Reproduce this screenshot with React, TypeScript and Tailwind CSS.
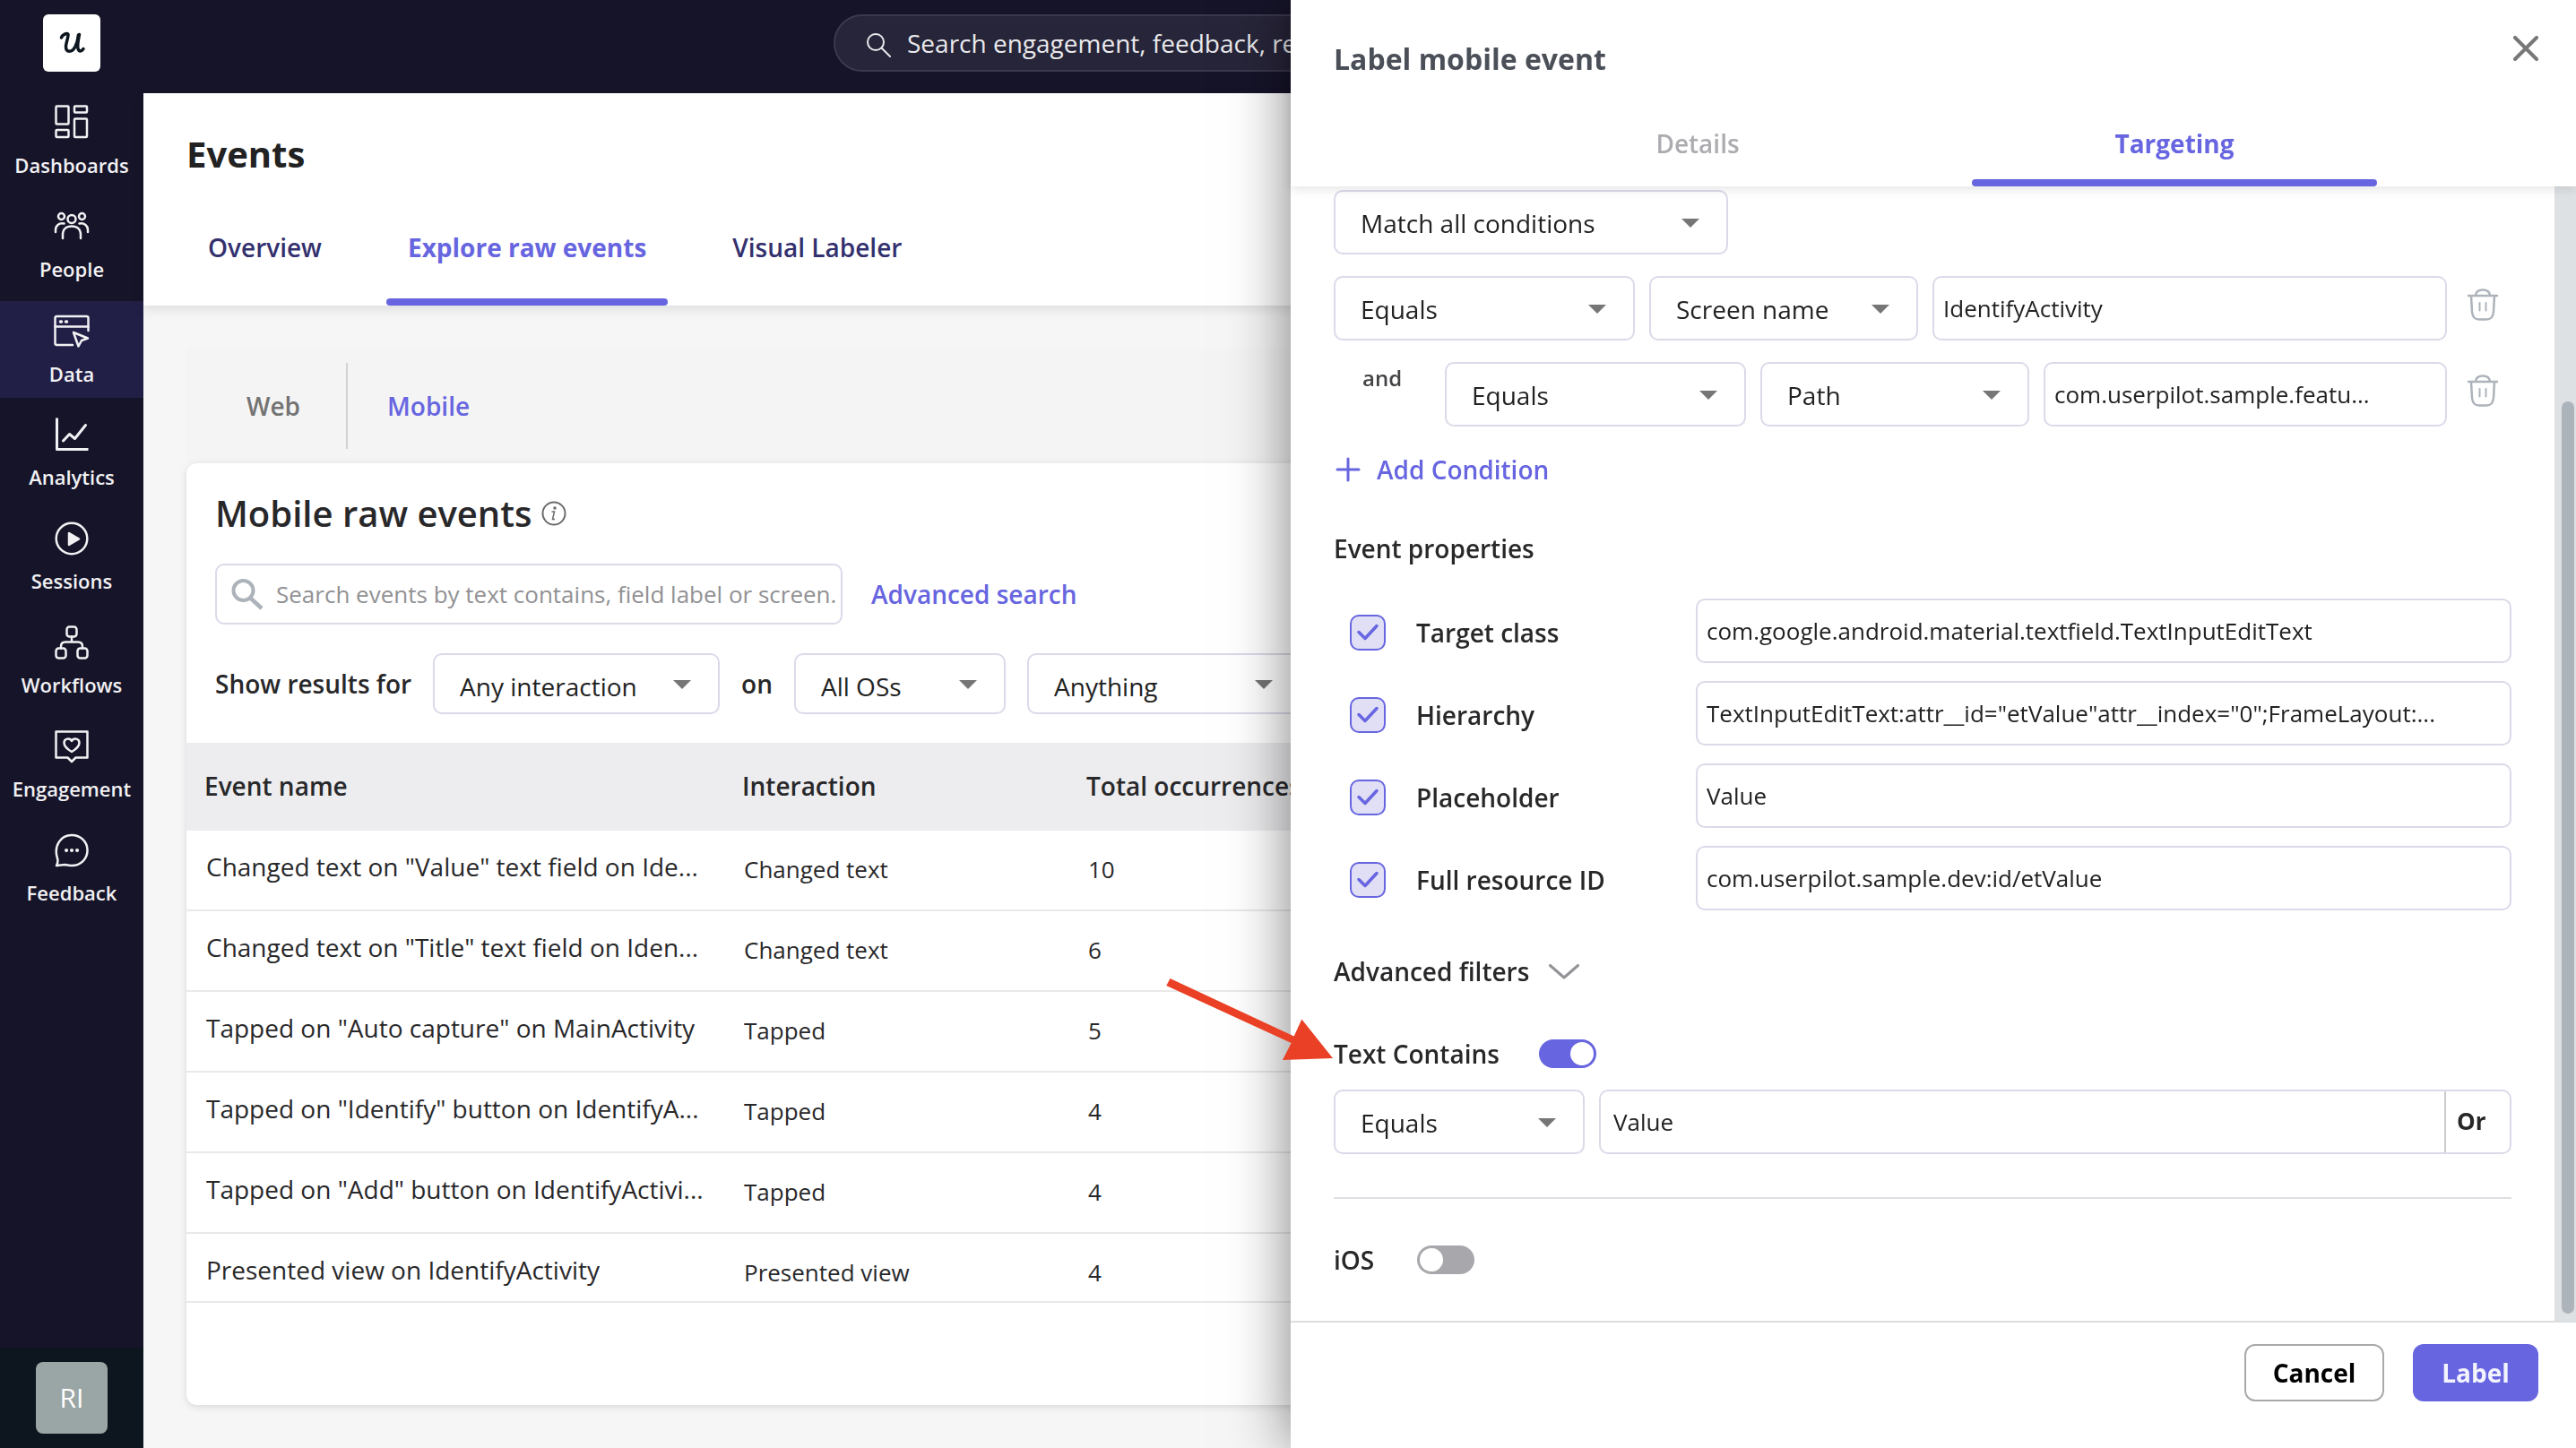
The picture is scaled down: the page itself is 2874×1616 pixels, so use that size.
import type { ReactNode } from 'react'

type SelectProps = {
  label: string
  value: string
  className: string
  padding?: string
}

type ToggleProps = {
  id: string
  checked?: boolean
}

const navItems: { name: string; active?: boolean; icon: ReactNode }[] = [
  {
    name: 'Dashboards',
    icon: (
      <g>
        <rect x="2.5" y="1.5" width="14" height="20" rx="1" />
        <rect x="23" y="1.5" width="14" height="7" rx="1" />
        <rect x="2.5" y="28" width="14" height="8" rx="1" />
        <rect x="23" y="15.500" width="14" height="20.500" rx="1" />
      </g>
    ),
  },
  {
    name: 'People',
    icon: (
      <g>
        <circle cx="20" cy="11.500" r="4.500" />
        <circle cx="8.500" cy="8.500" r="3.500" />
        <circle cx="31.500" cy="8.500" r="3.500" />
        <path d="M10 33v-4c0-6 4-9.500 10-9.500S30 23 30 29v4" />
        <path d="M2 26v-2c0-5 3.500-8.500 9.500-7.500M38 26v-2c0-5-3.500-8.500-9.500-7.500" />
      </g>
    ),
  },
  {
    name: 'Data',
    active: true,
    icon: (
      <g>
        <path d="M21 35H3.500C2 35 1.500 34.500 1.500 33V5c0-1.500.5-2 2-2h33c1.500 0 2 .5 2 2v14" />
        <path d="M1.500 14.500h37" />
        <path d="M7.500 9h1M13.500 9h1" strokeWidth="3.500" />
        <path d="M22 21l16 6.500-7 2.500-3.500 6.500z" />
      </g>
    ),
  },
  {
    name: 'Analytics',
    icon: (
      <g strokeWidth="3">
        <path d="M3.500 1.500v35h35" strokeLinecap="butt" />
        <path d="M10.500 27l7-7.500 6 5L35.500 9.500" />
      </g>
    ),
  },
  {
    name: 'Sessions',
    icon: (
      <g>
        <circle cx="20" cy="20" r="17.300" />
        <path d="M17 14v13l11-6.500z" fill="currentColor" />
      </g>
    ),
  },
  {
    name: 'Workflows',
    icon: (
      <g>
        <rect x="14.500" y="2.500" width="11" height="11" rx="3" />
        <rect x="2.500" y="26.500" width="11" height="11" rx="3" />
        <rect x="26.500" y="26.500" width="11" height="11" rx="3" />
        <path d="M20 13.500v6M8 26.500v-2c0-3 1.500-5 5-5h14c3.500 0 5 2 5 5v2" />
      </g>
    ),
  },
  {
    name: 'Engagement',
    icon: (
      <g>
        <path d="M2.500 3.500h35v29H24.500L20 37l-4.500-4.500h-13z" />
        <path d="M20 26c-5-3-8.500-6-8.500-10 0-5 6.500-6 8.500-2 2-4 8.500-3 8.500 2 0 4-3.500 7-8.500 10z" />
      </g>
    ),
  },
  {
    name: 'Feedback',
    icon: (
      <g>
        <path d="M3 37c1.500-3 2-5 1-8C-.5 14.500 8 3 20 3c10 0 17.500 7.500 17.500 17S30 37 20 37c-3 0-5-.5-7-1-3 0-6 .5-10 1z" />
        <path d="M14 20h.1M20 20h.1M26 20h.1" strokeWidth="4" />
      </g>
    ),
  },
]

const rows = [
  ['Changed text on "Value" text field on Ide...', 'Changed text', '10'],
  ['Changed text on "Title" text field on Iden...', 'Changed text', '6'],
  ['Tapped on "Auto capture" on MainActivity', 'Tapped', '5'],
  ['Tapped on "Identify" button on IdentifyA...', 'Tapped', '4'],
  ['Tapped on "Add" button on IdentifyActivi...', 'Tapped', '4'],
  ['Presented view on IdentifyActivity', 'Presented view', '4'],
]

const eventProperties = [
  { id: 'target-class', name: 'Target class', value: 'com.google.android.material.textfield.TextInputEditText' },
  { id: 'hierarchy', name: 'Hierarchy', value: 'TextInputEditText:attr__id="etValue"attr__index="0";FrameLayout:...' },
  { id: 'placeholder', name: 'Placeholder', value: 'Value' },
  { id: 'resource-id', name: 'Full resource ID', value: 'com.userpilot.sample.dev:id/etValue' },
]

const Select = ({ label, value, className, padding = 'pt-px' }: SelectProps) => (
  <div className={`relative shrink-0 ${className}`}>
    <select
      aria-label={label}
      defaultValue={value}
      className={`h-full w-full appearance-none rounded-[10px] border-2 border-[#dadae9] bg-white pl-7 text-[28px] text-[#222222] ${padding}`}
    >
      <option>{value}</option>
    </select>
    <svg viewBox="0 0 20 10" className="pointer-events-none absolute top-1/2 right-8 -mt-1 h-2.5 w-5 fill-[#767676]">
      <path d="M0 0h20L10 10z" />
    </svg>
  </div>
)

const Toggle = ({ id, checked }: ToggleProps) => (
  <input
    id={id}
    type="checkbox"
    role="switch"
    defaultChecked={checked}
    className="h-8 w-16 appearance-none rounded-full bg-[#a8a8ac] p-[3px] before:block before:size-[26px] before:rounded-full before:bg-white checked:bg-[#6765e0] checked:before:ml-8"
  />
)

const TrashButton = () => (
  <button aria-label="Delete condition" className="mt-3.5 ml-[22px] shrink-0 self-start">
    <svg viewBox="0 0 36 36" className="size-9 fill-none stroke-[#adb3ba] stroke-[2.5]" strokeLinecap="round">
      <path d="M2 8h32M10 7.500c.5-4 3-6 8-6s7.500 2 8 6M5 8l1 18c.5 6 3 8.500 8 8.500h8c5 0 7.500-2.500 8-8.500l1-18" />
      <path d="M14.500 16v8.500M21.500 16v8.500" strokeWidth="2" />
    </svg>
  </button>
)

const Sidebar = () => (
  <aside className="flex w-40 shrink-0 flex-col bg-[#161429]">
    <a href="#home" aria-label="Home" className="mx-12 mt-4 mb-6 flex size-16 rounded-md bg-white">
      <svg viewBox="0 0 64 64" className="size-16 fill-none stroke-[#0d161f] stroke-[3.5]" strokeLinecap="round">
        <path d="M20.500 26c1-3 6.500-6 7.500-3.500.5 2-2.500 10-2.500 13.500 0 7 7 7 10.500 0 2-4 3-8.500 3.500-13" />
        <path d="M40.500 22.500c-1 5-2.500 11-1.500 15.500 1 4 4 3.500 6 .5" />
      </svg>
    </a>
    <nav className="flex flex-1 flex-col gap-2">
      {navItems.map((item) => (
        <a
          key={item.name}
          href={`#${item.name.toLowerCase()}`}
          className={`flex h-[108px] flex-col items-center text-[22px] font-semibold text-[#f1f1f3] ${item.active ? 'bg-[#221f47] pt-3.5' : 'pt-[13px]'}`}
        >
          <svg
            viewBox="0 0 40 40"
            className="size-10 fill-none stroke-current stroke-[2.5]"
            strokeLinecap="round"
            strokeLinejoin="round"
          >
            {item.icon}
          </svg>
          <span className="mt-[11px] leading-8">{item.name}</span>
        </a>
      ))}
    </nav>
    <div className="bg-[#0d161f] px-10 py-4">
      <button className="size-20 rounded-lg bg-[#9aa6a5] pb-0.5 text-[30px] text-white">RI</button>
    </div>
  </aside>
)

const TopBar = () => (
  <header className="flex h-26 shrink-0 items-start justify-center bg-[#161429] pt-4">
    <label className="mr-[154px] flex h-16 w-[1020px] items-center gap-[18px] rounded-full border-2 border-[#3b394e] bg-[#272539] pl-[34px]">
      <svg viewBox="0 0 28 28" className="mt-1 size-7 shrink-0 fill-none stroke-[#e9e9ec] stroke-2" strokeLinecap="round">
        <circle cx="11" cy="11" r="9" />
        <path d="M17.500 17.500L27 27" />
      </svg>
      <input
        type="search"
        aria-label="Search"
        placeholder="Search engagement, feedback, resource center"
        className="min-w-0 flex-1 text-[28px] outline-none placeholder:text-[#e9e9ec]"
      />
    </label>
  </header>
)

const EventsHeader = () => (
  <section className="relative shrink-0 bg-white px-12 pt-11 shadow-[0_4px_12px_rgba(0,0,0,0.1)]">
    <h1 className="text-[40px] leading-12 font-bold text-[#222222]">Events</h1>
    <div className="mt-15 flex gap-12 text-[28px] leading-10 font-semibold text-[#33306e]">
      <button className="px-6 pb-[45px]">Overview</button>
      <button className="relative px-6 pb-[45px] font-bold text-[#6765e0]">
        Explore raw events
        <span className="absolute inset-x-0 bottom-0 h-2 rounded-full bg-[#6765e0]"></span>
      </button>
      <button className="px-6 pb-[45px]">Visual Labeler</button>
    </div>
  </section>
)

const RawEvents = () => (
  <section className="flex min-h-0 flex-1 flex-col p-12">
    <div className="flex h-32 shrink-0 items-center bg-[#f4f4f4] text-[28px] font-semibold">
      <button className="pr-[51px] pl-[67px] text-[#737373]">Web</button>
      <span className="h-24 w-0.5 bg-[#d2d2d4]"></span>
      <button className="pl-11 text-[#6765e0]">Mobile</button>
    </div>

    <div className="flex min-h-0 flex-1 flex-col rounded-xl bg-white pt-7 shadow-[0_2px_8px_rgba(0,0,0,0.12)]">
      <div className="px-8 pb-8">
        <h2 className="flex items-center gap-2.5 text-[40px] leading-14 font-semibold text-[#28282a]">
          Mobile raw events
          <svg viewBox="0 0 28 28" className="size-7 fill-none stroke-[#6b6b6e] stroke-2">
            <circle cx="14" cy="14" r="12.500" strokeWidth="2" />
            <path d="M11.500 12h3l-2 8.500h2.500" strokeWidth="1.500" />
            <circle cx="15" cy="8" r=".8" />
          </svg>
        </h2>
        <div className="mt-7 flex items-center">
          <label className="flex h-17 w-[700px] items-center gap-3.5 rounded-[10px] border-2 border-[#dadae9] pl-4">
            <svg viewBox="0 0 36 36" className="size-9 shrink-0 fill-none stroke-[#adb3ba] stroke-[4]">
              <circle cx="13.500" cy="14" r="11" />
              <path d="M22 23l12 11" strokeWidth="4.500" />
            </svg>
            <input
              type="text"
              aria-label="Search events"
              placeholder="Search events by text contains, field label or screen."
              className="min-w-0 flex-1 text-[26px] outline-none placeholder:text-[#919193]"
            />
          </label>
          <button className="ml-8 text-[28px] font-semibold text-[#6765e0]">Advanced search</button>
        </div>
        <div className="mt-8 flex items-center gap-6 text-[28px] font-semibold text-[#28282a]">
          <span className="shrink-0">Show results for</span>
          <Select label="Interaction" value="Any interaction" className="h-17 w-80 font-normal" padding="pt-[5px]" />
          <span>on</span>
          <Select label="Operating system" value="All OSs" className="h-17 w-[236px] font-normal" padding="pt-[5px]" />
          <Select label="Target" value="Anything" className="h-17 w-[306px] font-normal" padding="pt-[5px]" />
        </div>
      </div>

      <div className="min-h-0 flex-1 overflow-hidden border-b-2 border-[#e9e9e9]">
        <table className="w-full table-fixed border-separate border-spacing-0 text-left text-[#28282a]">
          <colgroup>
            <col className="w-[600px]" />
            <col className="w-96" />
            <col />
          </colgroup>
          <thead className="bg-[#ededef] text-[28px]">
            <tr>
              <th className="h-[98px] pb-0.5 pl-5 font-semibold">Event name</th>
              <th className="pb-0.5 pl-5 font-semibold">Interaction</th>
              <th className="pb-0.5 pl-5 font-semibold">Total occurrences</th>
            </tr>
          </thead>
          <tbody className="text-[26px]">
            {rows.map(([name, interaction, total]) => (
              <tr key={name}>
                <td className="h-[90px] border-b-2 border-[#e9e9e9] pb-2 pl-[22px] text-[28px] whitespace-nowrap">{name}</td>
                <td className="border-b-2 border-[#e9e9e9] pb-0.5 pl-[22px]">{interaction}</td>
                <td className="border-b-2 border-[#e9e9e9] pb-0.5 pl-[22px]">{total}</td>
              </tr>
            ))}
          </tbody>
        </table>
      </div>
      <div className="h-[114px] shrink-0"></div>
    </div>
  </section>
)

const textInput = 'h-18 min-w-0 flex-1 rounded-[10px] border-2 border-[#dadae9] px-2.5 text-[26px] text-[#222222]'

const LabelPanel = () => (
  <aside className="fixed inset-y-0 right-0 flex w-[calc(50%-3px)] flex-col bg-white text-[28px] leading-10 text-[#28282a] shadow-[0_0_64px_rgba(0,0,0,0.5)]">
    <header className="relative z-10 bg-white pt-10 shadow-[0_2px_12px_rgba(0,0,0,0.12)]">
      <div className="flex items-start justify-between pr-[42px] pl-12">
        <h2 className="text-[32px] leading-13 font-bold text-[#4b4f58]">Label mobile event</h2>
        <button aria-label="Close">
          <svg viewBox="0 0 28 28" className="size-7 stroke-[#777777] stroke-4" strokeLinecap="round">
            <path d="M2 2l24 24M26 2L2 26" />
          </svg>
        </button>
      </div>
      <div className="mt-12 flex justify-center gap-20 pl-1.5">
        <button className="w-[452px] pb-7 font-semibold text-[#acacb0]">Details</button>
        <button className="relative w-[452px] pb-7 font-bold text-[#6765e0]">
          Targeting
          <span className="absolute inset-x-0 bottom-0 h-2 rounded-full bg-[#6765e0]"></span>
        </button>
      </div>
    </header>

    <div className="flex min-h-0 flex-1">
      <div className="flex-1 overflow-hidden px-12 pt-1">
        <Select label="Condition matching" value="Match all conditions" className="h-18 w-[440px]" />
        <div className="mt-6 flex pr-3.5">
          <Select label="Operator" value="Equals" className="mr-4 h-18 w-[336px]" />
          <Select label="Attribute" value="Screen name" className="mr-4 h-18 w-75" />
          <input type="text" aria-label="Screen name value" defaultValue="IdentifyActivity" className={textInput} />
          <TrashButton />
        </div>
        <div className="mt-6 flex pr-3.5">
          <span className="w-31 shrink-0 pl-8 text-[24px] leading-9 font-semibold text-[#444446]">and</span>
          <Select label="Operator" value="Equals" className="mr-4 h-18 w-[336px]" />
          <Select label="Attribute" value="Path" className="mr-4 h-18 w-75" />
          <input type="text" aria-label="Path value" defaultValue="com.userpilot.sample.featu..." className={textInput} />
          <TrashButton />
        </div>
        <button className="mt-7 flex items-center gap-4 font-semibold text-[#6765e0]">
          <svg viewBox="0 0 32 32" className="size-8 stroke-current stroke-3" strokeLinecap="round">
            <path d="M16 4v24M4 16h24" />
          </svg>
          Add Condition
        </button>

        <h3 className="mt-12 font-semibold">Event properties</h3>
        <div className="mt-9 flex flex-col gap-5">
          {eventProperties.map((property) => (
            <div key={property.id} className="flex items-center">
              <label className="flex w-[404px] shrink-0 items-center gap-[34px] pt-[3px] pl-[18px] font-semibold">
                <span className="relative size-10">
                  <input
                    type="checkbox"
                    defaultChecked
                    className="block size-10 appearance-none rounded-[10px] border-2 border-[#6765e0] bg-[#e0dff6]"
                  />
                  <svg
                    viewBox="0 0 40 40"
                    className="pointer-events-none absolute inset-0 size-10 fill-none stroke-[#6765e0] stroke-[3.5]"
                    strokeLinecap="round"
                    strokeLinejoin="round"
                  >
                    <path d="M10 19.500l7 7L30 12.500" />
                  </svg>
                </span>
                {property.name}
              </label>
              <input type="text" aria-label={`${property.name} value`} defaultValue={property.value} className={textInput} />
            </div>
          ))}
        </div>

        <button className="mt-12 flex items-center gap-[22px] font-semibold">
          Advanced filters
          <svg
            viewBox="0 0 34 17"
            className="h-[17px] w-[34px] fill-none stroke-[#939398] stroke-3"
            strokeLinecap="round"
            strokeLinejoin="round"
          >
            <path d="M1.500 1.500L17 15 32.500 1.500" />
          </svg>
        </button>

        <div className="mt-13 flex items-center gap-11">
          <label htmlFor="text-contains" className="font-semibold">Text Contains</label>
          <Toggle id="text-contains" checked />
        </div>
        <div className="mt-5 flex gap-4">
          <Select label="Text operator" value="Equals" className="h-18 w-70" />
          <div className="flex h-18 min-w-0 flex-1 rounded-[10px] border-2 border-[#dadae9]">
            <input type="text" aria-label="Text value" defaultValue="Value" className="min-w-0 flex-1 px-3.5 text-[26px] text-[#222222]" />
            <button className="w-[73px] border-l-2 border-[#cccccf] pb-0.5 pl-3 text-left text-[26px] font-bold">Or</button>
          </div>
        </div>

        <hr className="mt-12 border-t-2 border-[#dddfe2]" />
        <div className="mt-12 flex items-center gap-12">
          <label htmlFor="ios" className="font-semibold">iOS</label>
          <Toggle id="ios" />
        </div>
      </div>
      <div className="flex w-6 shrink-0 justify-end bg-[#dde1e4] pt-60 pr-0.5 pb-2">
        <span className="w-3.5 rounded-full bg-[#adb3ba]"></span>
      </div>
    </div>

    <footer className="flex h-[142px] shrink-0 items-start justify-end gap-8 border-t-2 border-[#dcdee0] pt-6 pr-[42px] font-bold">
      <button className="h-16 w-39 rounded-xl border-2 border-[#a9a9ab] text-black">Cancel</button>
      <button className="h-16 w-35 rounded-xl bg-[#6765e0] text-[#f3f3fd]">Label</button>
    </footer>

    {/* callout arrow pointing at the Text Contains filter */}
    <svg viewBox="0 0 188 94" className="pointer-events-none absolute top-[1091px] -left-35 h-[94px] w-[188px] fill-[#ea4025]">
      <path d="M5.500 1L1.300 9 140.600 73 131 92l56-2-34.700-43.500-8.600 19z" />
    </svg>
  </aside>
)

const App = () => {
  return (
    <div className="flex h-screen bg-[#f6f6f6] font-['Open_Sans',sans-serif]">
      <Sidebar />
      <main className="flex min-w-0 flex-1 flex-col">
        <TopBar />
        <EventsHeader />
        <RawEvents />
      </main>
      <LabelPanel />
    </div>
  )
}

export default App
